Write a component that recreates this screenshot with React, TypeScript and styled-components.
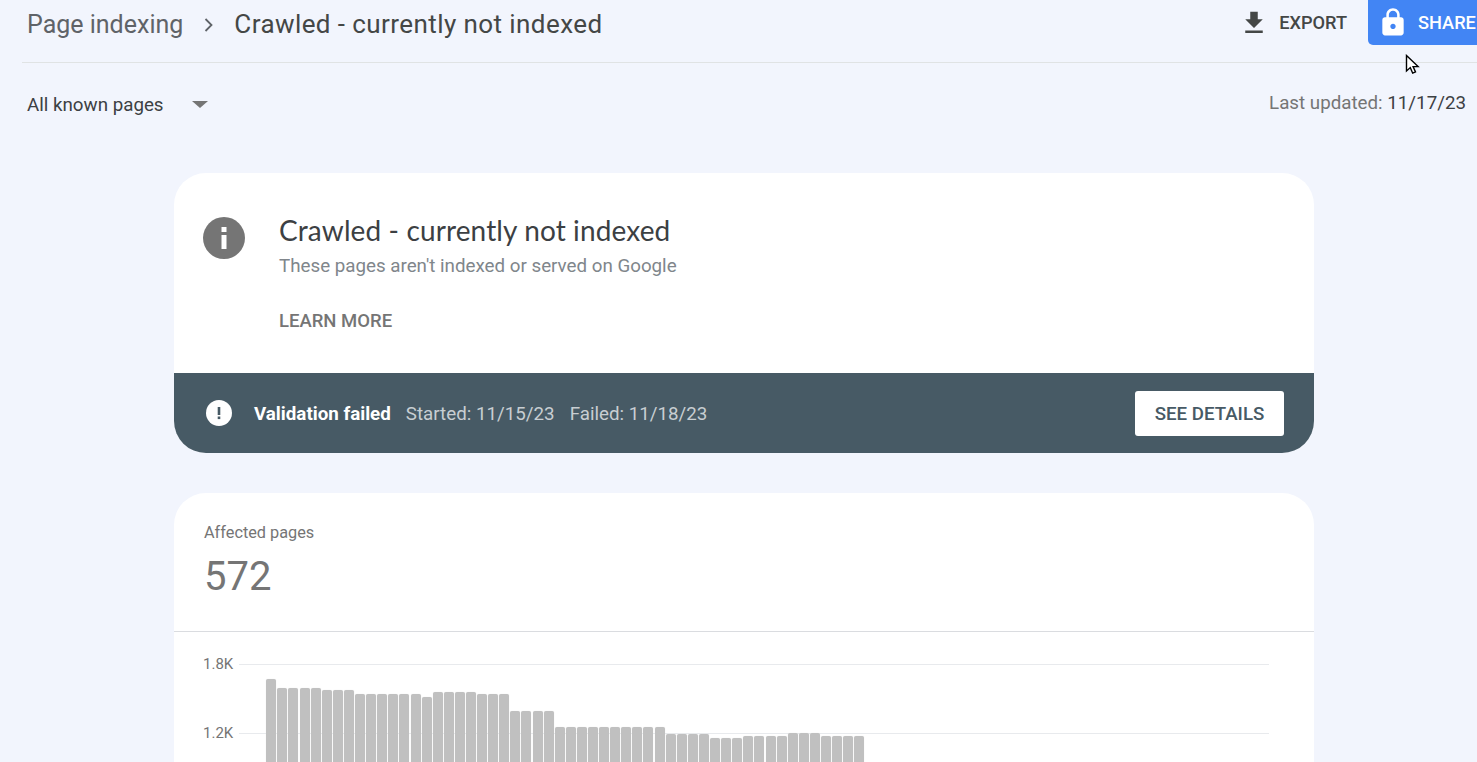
import styled, { createGlobalStyle } from 'styled-components'

const GlobalStyle = createGlobalStyle`
  html, body {
    margin: 0;
    padding: 0;
    background: #f2f5fd;
    font-family: Roboto, "Liberation Sans", sans-serif;
  }
`

const Page = styled.div`
  position: relative;
  height: 762px;
  overflow: hidden;
  background: #f2f5fd;
`

const Header = styled.header`
  display: flex;
  align-items: flex-start;
  justify-content: space-between;
  height: 62px;
  margin-left: 22px;
  padding-left: 5px;
  border-bottom: 1px solid #e0e3e4;
`

const Breadcrumb = styled.div`
  display: flex;
  align-items: center;
  height: 49px;
  font-size: 25px;
  color: #5f6368;
`

const CrumbCurrent = styled.span`
  padding-bottom: 2px;
  color: #444746;
  font-size: 26px;
  letter-spacing: 0.42px;
`

const CrumbArrow = styled.svg`
  width: 14px;
  height: 16px;
  margin: 0 18px 0 19px;
`

const Actions = styled.div`
  display: flex;
  align-items: flex-start;
`

const ExportButton = styled.div`
  display: flex;
  align-items: center;
  gap: 10px;
  height: 45px;
  margin-right: 21px;
  font-size: 18.2px;
  font-weight: 500;
  color: #444746;
`

const ShareButton = styled.div`
  display: flex;
  align-items: center;
  gap: 13px;
  width: 109px;
  height: 45px;
  padding-left: 13px;
  box-sizing: border-box;
  overflow: hidden;
  white-space: nowrap;
  background: #4285f4;
  border-radius: 0 0 0 5px;
  font-size: 18.2px;
  font-weight: 500;
  color: #fff;
`

const FilterRow = styled.div`
  display: flex;
  justify-content: space-between;
  height: 110px;
  padding: 0 11px 0 27px;
`

const Filter = styled.div`
  display: flex;
  align-items: center;
  height: 83px;
  font-size: 18.75px;
  color: #3c4043;
`

const Caret = styled.span`
  width: 0;
  height: 0;
  margin-left: 28px;
  border-left: 8px solid transparent;
  border-right: 8px solid transparent;
  border-top: 7px solid #757575;
`

const Updated = styled.div`
  padding-top: 29px;
  font-size: 18.75px;
  color: #757575;
`

const UpdatedDate = styled.span`
  color: #3c4043;
`

const Column = styled.main`
  display: flex;
  flex-direction: column;
  gap: 40px;
  width: 1140px;
  margin-left: 174px;
`

const Card = styled.section`
  background: #fff;
  border-radius: 32px;
  overflow: hidden;
`

const Intro = styled.div`
  display: flex;
  gap: 34px;
  height: 200px;
  padding: 43px 0 0 29px;
  box-sizing: border-box;
`

const InfoIcon = styled.svg`
  width: 42px;
  height: 42px;
  margin-top: 1px;
`

const IntroText = styled.div`
  display: flex;
  flex-direction: column;
  align-items: flex-start;
`

const Title = styled.h1`
  margin: 0;
  font-family: Lato, Roboto, sans-serif;
  font-size: 28px;
  font-weight: 400;
  line-height: 28px;
  letter-spacing: 0.12px;
  color: #3c4043;
`

const Subtitle = styled.p`
  margin: 10px 0 0;
  font-size: 18.75px;
  line-height: 24px;
  color: #80868b;
`

const LearnMore = styled.a`
  margin-top: 31px;
  font-size: 18.5px;
  font-weight: 500;
  line-height: 24px;
  color: #757575;
`

const Banner = styled.div`
  display: flex;
  align-items: center;
  height: 80px;
  padding: 0 30px 0 32px;
  background: #475a65;
`

const BannerIcon = styled.svg`
  width: 26px;
  height: 26px;
  margin-right: 22px;
`

const BannerTitle = styled.strong`
  margin-right: 15px;
  padding-top: 2px;
  font-size: 18.75px;
  font-weight: 700;
  color: #fff;
`

const BannerMeta = styled.span`
  margin-right: 15px;
  padding-top: 2px;
  font-size: 18.75px;
  color: #c8ced2;
`

const DetailsButton = styled.button`
  margin-left: auto;
  width: 149px;
  height: 45px;
  padding: 2px 0 0;
  border: none;
  border-radius: 3px;
  background: #fff;
  font-family: inherit;
  font-size: 18.7px;
  font-weight: 500;
  color: #475a65;
`

const Summary = styled.div`
  height: 139px;
  padding: 30px 30px 0;
  box-sizing: border-box;
  border-bottom: 1px solid #dadce0;
`

const SummaryLabel = styled.div`
  font-size: 16.3px;
  line-height: 20px;
  color: #757575;
`

const SummaryValue = styled.div`
  margin-top: 10px;
  font-size: 40px;
  line-height: 48px;
  color: #757575;
`

const Chart = styled.div`
  position: relative;
  height: 400px;
  padding-left: 29px;
`

const GridLines = styled.div`
  display: flex;
  flex-direction: column;
  gap: 49px;
  padding-top: 22px;
  margin-right: 45px;
`

const GridLine = styled.div`
  display: flex;
  align-items: center;
  gap: 6px;
  height: 20px;
  font-size: 15px;
  color: #757575;
`

const Rule = styled.span`
  flex: 1;
  height: 1px;
  background: #e8eaed;
`

const Bars = styled.div`
  position: absolute;
  top: 47px;
  left: 92.3px;
  display: flex;
  gap: 1.1px;
`

const Bar = styled.div<{ $top: number }>`
  width: 10px;
  height: 300px;
  margin-top: ${p => p.$top}px;
  border-radius: 2px 2px 0 0;
  background: #c0c0c0;
  box-shadow: 0 0 1px #dddddd;
`

const Cursor = styled.svg`
  position: absolute;
  top: 54px;
  left: 1405px;
  width: 15px;
  height: 22px;
`

// [top of bar in chart px, how many bars in a row]
const barRuns: [number, number][] = [
  [0, 1], [9, 4], [11, 3], [15, 6], [18, 1], [13, 4], [15, 3],
  [32, 4], [48, 10], [55, 4], [59, 3], [57, 4], [54, 3], [57, 4],
]
const barTops = barRuns.flatMap(([top, count]) => Array<number>(count).fill(top))

const App = () => {
  return (
    <Page>
      <GlobalStyle />
      <Header>
        <Breadcrumb>
          Page indexing
          <CrumbArrow viewBox="0 0 14 16">
            <path d="M3.5 2 9.5 8 3.5 14" fill="none" stroke="#5f6368" strokeWidth="1.8" />
          </CrumbArrow>
          <CrumbCurrent>Crawled - currently not indexed</CrumbCurrent>
        </Breadcrumb>
        <Actions>
          <ExportButton>
            <svg width="30" height="30" viewBox="0 0 24 24">
              <path d="M19 9h-4V3H9v6H5l7 7 7-7zM5 18v2h14v-2H5z" fill="#444746" />
            </svg>
            EXPORT
          </ExportButton>
          <ShareButton>
            <svg width="24" height="31" viewBox="3 0 18 24" preserveAspectRatio="none">
              <path
                d="M18 8h-1V6c0-2.76-2.24-5-5-5S7 3.24 7 6v2H6c-1.1 0-2 .9-2 2v10c0 1.1.9 2 2 2h12c1.1 0 2-.9 2-2V10c0-1.1-.9-2-2-2zm-6 9c-1.1 0-2-.9-2-2s.9-2 2-2 2 .9 2 2-.9 2-2 2zm3.1-9H8.9V6c0-1.71 1.39-3.1 3.1-3.1 1.71 0 3.1 1.39 3.1 3.1v2z"
                fill="#fff"
              />
            </svg>
            SHARE
          </ShareButton>
        </Actions>
      </Header>
      <FilterRow>
        <Filter>
          All known pages
          <Caret />
        </Filter>
        <Updated>
          Last updated: <UpdatedDate>11/17/23</UpdatedDate>
        </Updated>
      </FilterRow>
      <Column>
        <Card>
          <Intro>
            <InfoIcon viewBox="0 0 42 42">
              <circle cx="21" cy="21" r="21" fill="#757575" />
              <rect x="18.5" y="10" width="5" height="5" fill="#fff" />
              <rect x="18.5" y="18" width="5" height="14" fill="#fff" />
            </InfoIcon>
            <IntroText>
              <Title>Crawled - currently not indexed</Title>
              <Subtitle>These pages aren't indexed or served on Google</Subtitle>
              <LearnMore>LEARN MORE</LearnMore>
            </IntroText>
          </Intro>
          <Banner>
            <BannerIcon viewBox="0 0 26 26">
              <circle cx="13" cy="13" r="13" fill="#fff" />
              <rect x="11.7" y="7" width="2.6" height="8" fill="#475a65" />
              <rect x="11.7" y="16.5" width="2.6" height="2.6" fill="#475a65" />
            </BannerIcon>
            <BannerTitle>Validation failed</BannerTitle>
            <BannerMeta>Started: 11/15/23</BannerMeta>
            <BannerMeta>Failed: 11/18/23</BannerMeta>
            <DetailsButton>SEE DETAILS</DetailsButton>
          </Banner>
        </Card>
        <Card>
          <Summary>
            <SummaryLabel>Affected pages</SummaryLabel>
            <SummaryValue>572</SummaryValue>
          </Summary>
          <Chart>
            <GridLines>
              <GridLine>1.8K<Rule /></GridLine>
              <GridLine>1.2K<Rule /></GridLine>
            </GridLines>
            <Bars>
              {barTops.map((top, i) => (
                <Bar key={i} $top={top} />
              ))}
            </Bars>
          </Chart>
        </Card>
      </Column>
      <Cursor viewBox="0 0 15 22">
        <path
          d="M1.5 1.5v15.5l3.8-3.4 2.4 5.6 2.8-1.2-2.4-5.4h5z"
          fill="#fff"
          stroke="#000"
          strokeWidth="1.4"
        />
      </Cursor>
    </Page>
  )
}

export default App
